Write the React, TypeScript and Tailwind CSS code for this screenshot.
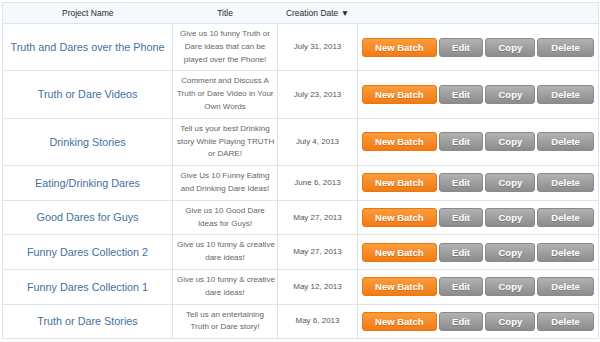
const rows = [
  { name: "Truth and Dares over the Phone", title: ["Give us 10 funny Truth or", "Dare ideas that can be", "played over the Phone!"], date: "July 31, 2013" },
  { name: "Truth or Dare Videos", title: ["Comment and Discuss A", "Truth or Dare Video in Your", "Own Words"], date: "July 23, 2013" },
  { name: "Drinking Stories", title: ["Tell us your best Drinking", "story While Playing TRUTH", "or DARE!"], date: "July 4, 2013" },
  { name: "Eating/Drinking Dares", title: ["Give Us 10 Funny Eating", "and Drinking Dare Ideas!"], date: "June 6, 2013" },
  { name: "Good Dares for Guys", title: ["Give us 10 Good Dare", "Ideas for Guys!"], date: "May 27, 2013" },
  { name: "Funny Dares Collection 2", title: ["Give us 10 funny & creative", "dare ideas!"], date: "May 27, 2013" },
  { name: "Funny Dares Collection 1", title: ["Give us 10 funny & creative", "dare ideas!"], date: "May 12, 2013" },
  { name: "Truth or Dare Stories", title: ["Tell us an entertaining", "Truth or Dare story!"], date: "May 6, 2013" },
];

const btn =
  "h-[19px] rounded-[3px] text-white font-bold text-[9.5px] leading-[17px] text-center [text-shadow:0_1px_0_rgba(0,0,0,0.2)]";
const gray = "bg-gradient-to-b from-[#b2b2b2] to-[#8c8c8c] border border-[#8a8a8a]";

export default function App() {
  return (
    <div className="w-[600px] h-[342px] bg-white pt-[2px] pl-[2px] [font-family:Liberation_Sans,Arial,sans-serif] overflow-hidden">
      <table className="w-[596px] table-fixed border-collapse border border-[#dfe4ea] [font-family:Liberation_Sans,Arial,sans-serif]">
        <colgroup>
          <col className="w-[170px]" />
          <col className="w-[105px]" />
          <col className="w-[80px]" />
          <col className="w-[241px]" />
        </colgroup>
        <thead>
          <tr className="h-[21px] bg-[#f5f8fc] border-b border-[#dfe4ea]">
            <th className="text-[8.5px] font-normal text-[#2a2a2a]">Project Name</th>
            <th className="text-[8.5px] font-normal text-[#2a2a2a]">Title</th>
            <th className="text-[8.5px] font-normal text-[#2a2a2a] whitespace-nowrap">Creation Date ▼</th>
            <th></th>
          </tr>
        </thead>
        <tbody>
          {rows.map((r, i) => (
            <tr key={i} className="border-b border-[#dfe4ea]">
              <td className="border-r border-[#dfe4ea] text-center text-[10.8px] text-[#44709e] px-1 whitespace-nowrap">{r.name}</td>
              <td className="border-r border-[#dfe4ea] text-center text-[8px] leading-[12.8px] text-[#666] py-1 px-1">
                {r.title.map((t, j) => (
                  <div key={j} className="whitespace-nowrap">{t}</div>
                ))}
              </td>
              <td className="border-r border-[#dfe4ea] text-center text-[8px] text-[#555]">{r.date}</td>
              <td className="px-[4px]">
                <div className="flex gap-[2px]">
                  <div className={`${btn} w-[75px] bg-gradient-to-b from-[#fb9c3c] to-[#f27b12] border border-[#e8780f]`}>New Batch</div>
                  <div className={`${btn} w-[45px] ${gray}`}>Edit</div>
                  <div className={`${btn} w-[50px] ${gray}`}>Copy</div>
                  <div className={`${btn} w-[57px] ${gray}`}>Delete</div>
                </div>
              </td>
            </tr>
          ))}
        </tbody>
      </table>
    </div>
  );
}
